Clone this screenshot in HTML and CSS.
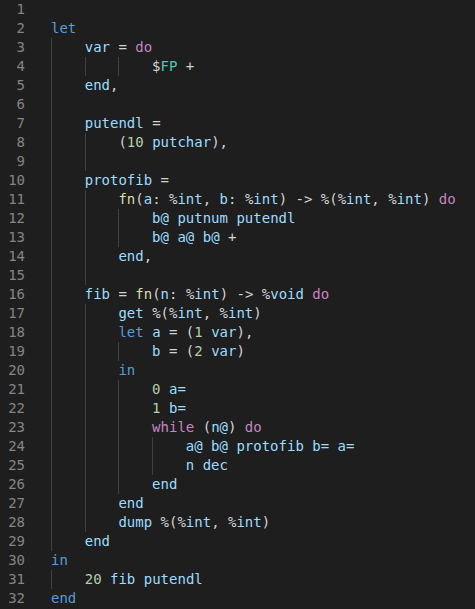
FILE: index.html
```html
<!DOCTYPE html>
<html>
<head>
<meta charset="utf-8">
<link rel="stylesheet" href="styles.css">
</head>
<body>
<div class="editor">
<div class="ln"><span class="num">1</span><span class="code"></span></div>
<div class="ln"><span class="num">2</span><span class="code"><span class="k">let</span></span></div>
<div class="ln"><span class="num">3</span><span class="code"><span class="g"></span><span class="v">var</span> = <span class="c">do</span></span></div>
<div class="ln"><span class="num">4</span><span class="code"><span class="g"></span><span class="g"></span><span class="g"></span>$<span class="t">FP</span> +</span></div>
<div class="ln"><span class="num">5</span><span class="code"><span class="g"></span><span class="v">end</span>,</span></div>
<div class="ln"><span class="num">6</span><span class="code"><span class="g"></span></span></div>
<div class="ln"><span class="num">7</span><span class="code"><span class="g"></span><span class="v">putendl</span> =</span></div>
<div class="ln"><span class="num">8</span><span class="code"><span class="g"></span><span class="g"></span>(<span class="n">10</span> <span class="v">putchar</span>),</span></div>
<div class="ln"><span class="num">9</span><span class="code"><span class="g"></span><span class="g"></span></span></div>
<div class="ln"><span class="num">10</span><span class="code"><span class="g"></span><span class="v">protofib</span> =</span></div>
<div class="ln"><span class="num">11</span><span class="code"><span class="g"></span><span class="g"></span><span class="f">fn</span>(<span class="v">a</span>: %<span class="v">int</span>, <span class="v">b</span>: %<span class="v">int</span>) -&gt; %(%<span class="v">int</span>, %<span class="v">int</span>) <span class="c">do</span></span></div>
<div class="ln"><span class="num">12</span><span class="code"><span class="g"></span><span class="g"></span><span class="g"></span><span class="v">b@</span> <span class="v">putnum</span> <span class="v">putendl</span></span></div>
<div class="ln"><span class="num">13</span><span class="code"><span class="g"></span><span class="g"></span><span class="g"></span><span class="v">b@</span> <span class="v">a@</span> <span class="v">b@</span> +</span></div>
<div class="ln"><span class="num">14</span><span class="code"><span class="g"></span><span class="g"></span><span class="v">end</span>,</span></div>
<div class="ln"><span class="num">15</span><span class="code"><span class="g"></span><span class="g"></span></span></div>
<div class="ln"><span class="num">16</span><span class="code"><span class="g"></span><span class="v">fib</span> = <span class="f">fn</span>(<span class="v">n</span>: %<span class="v">int</span>) -&gt; %<span class="v">void</span> <span class="c">do</span></span></div>
<div class="ln"><span class="num">17</span><span class="code"><span class="g"></span><span class="g"></span><span class="v">get</span> %(%<span class="v">int</span>, %<span class="v">int</span>)</span></div>
<div class="ln"><span class="num">18</span><span class="code"><span class="g"></span><span class="g"></span><span class="k">let</span> <span class="v">a</span> = (<span class="n">1</span> <span class="v">var</span>),</span></div>
<div class="ln"><span class="num">19</span><span class="code"><span class="g"></span><span class="g"></span><span class="g"></span><span class="v">b</span> = (<span class="n">2</span> <span class="v">var</span>)</span></div>
<div class="ln"><span class="num">20</span><span class="code"><span class="g"></span><span class="g"></span><span class="k">in</span></span></div>
<div class="ln"><span class="num">21</span><span class="code"><span class="g"></span><span class="g"></span><span class="g"></span><span class="n">0</span> <span class="v">a=</span></span></div>
<div class="ln"><span class="num">22</span><span class="code"><span class="g"></span><span class="g"></span><span class="g"></span><span class="n">1</span> <span class="v">b=</span></span></div>
<div class="ln"><span class="num">23</span><span class="code"><span class="g"></span><span class="g"></span><span class="g"></span><span class="c">while</span> (<span class="v">n@</span>) <span class="c">do</span></span></div>
<div class="ln"><span class="num">24</span><span class="code"><span class="g"></span><span class="g"></span><span class="g"></span><span class="g"></span><span class="v">a@</span> <span class="v">b@</span> <span class="v">protofib</span> <span class="v">b=</span> <span class="v">a=</span></span></div>
<div class="ln"><span class="num">25</span><span class="code"><span class="g"></span><span class="g"></span><span class="g"></span><span class="g"></span><span class="v">n</span> <span class="v">dec</span></span></div>
<div class="ln"><span class="num">26</span><span class="code"><span class="g"></span><span class="g"></span><span class="g"></span><span class="v">end</span></span></div>
<div class="ln"><span class="num">27</span><span class="code"><span class="g"></span><span class="g"></span><span class="v">end</span></span></div>
<div class="ln"><span class="num">28</span><span class="code"><span class="g"></span><span class="g"></span><span class="v">dump</span> %(%<span class="v">int</span>, %<span class="v">int</span>)</span></div>
<div class="ln"><span class="num">29</span><span class="code"><span class="g"></span><span class="v">end</span></span></div>
<div class="ln"><span class="num">30</span><span class="code"><span class="k">in</span></span></div>
<div class="ln"><span class="num">31</span><span class="code"><span class="g"></span><span class="n">20</span> <span class="v">fib</span> <span class="v">putendl</span></span></div>
<div class="ln"><span class="num">32</span><span class="code"><span class="k">end</span></span></div>
</div>
</body>
</html>
```
FILE: styles.css
```css
html, body {
  margin: 0;
  padding: 0;
  background: #1e1e1e;
}
.editor {
  width: 475px;
  height: 609px;
  background: #1e1e1e;
  font-family: "DejaVu Sans Mono", monospace;
  font-size: 14px;
  line-height: 19px;
  color: #d4d4d4;
  overflow: hidden;
}
.ln {
  display: flex;
  height: 19px;
}
.num {
  flex: 0 0 25px;
  text-align: right;
  color: #858585;
  margin-right: 26px;
}
.code {
  white-space: pre;
  flex: 1;
}
.g {
  display: inline-block;
  width: 4ch;
  height: 19px;
  vertical-align: top;
  box-shadow: inset 1px 0 0 #404040;
}
.k { color: #569cd6; }
.v { color: #9cdcfe; }
.c { color: #c586c0; }
.n { color: #b5cea8; }
.f { color: #dcdcaa; }
.t { color: #4ec9b0; }
```
